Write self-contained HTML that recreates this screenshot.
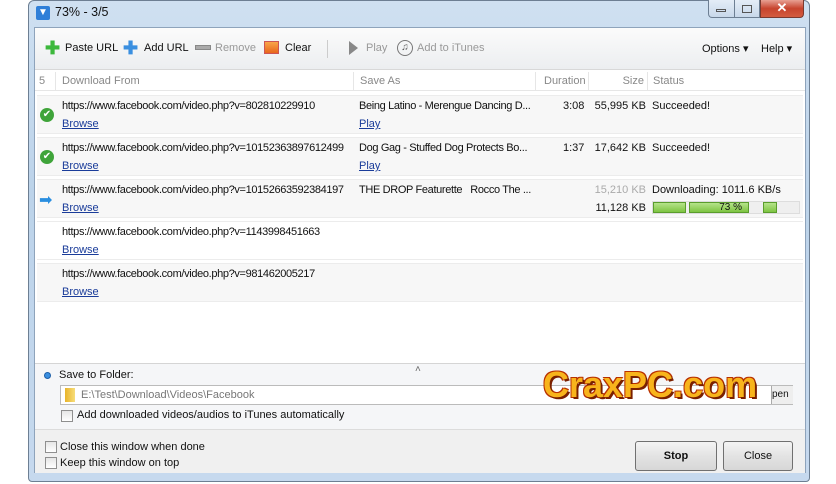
<!DOCTYPE html>
<html><head><style>
*{margin:0;padding:0;box-sizing:border-box}
body{width:836px;height:484px;background:#fff;font-family:"Liberation Sans",sans-serif;font-size:11px;color:#111;position:relative;overflow:hidden}
.abs{position:absolute}
.win{left:28px;top:0;width:782px;height:482px;border:1px solid #6d7f93;border-radius:6px 6px 4px 4px;background:linear-gradient(#cfe0f1,#bcd3ea 40%,#c6d9ee);}
.inner{left:34px;top:27px;width:772px;height:446px;background:#fff;border:1px solid #8ea3bb}
.tb{left:0;top:0;width:770px;height:42px;background:linear-gradient(#fbfbfb,#eceef0);border-bottom:1px solid #d8d8d8}
.ti{top:14px;color:#111}
.dis{color:#999}
.hdr{top:44px;left:0;width:770px;height:19px;color:#888;border-bottom:1px solid #e6e6e6}
.row{left:2px;width:766px;height:39px;background:#f7f7f7;border-top:1px solid #ececec;border-bottom:1px solid #ececec}
.u{letter-spacing:-0.35px}
a{color:#1a3c9a;text-decoration:underline}
.btn{border:1px solid #707070;border-radius:3px;background:linear-gradient(#f4f4f4,#e3e3e3 50%,#d7d7d7);text-align:center;line-height:28px}
.cb{width:12px;height:12px;border:1px solid #8f8f8f;background:linear-gradient(#e6e6e6,#fff)}
</style></head><body>
<div class="abs win"></div>
<div class="abs" style="left:36px;top:6px;width:14px;height:14px;background:#2f7fd8;border-radius:2px;color:#fff;font-size:10px;text-align:center;line-height:14px">&#9660;</div>
<div class="abs" style="left:55px;top:5px;font-size:12.5px">73% - 3/5</div>
<div class="abs" style="left:708px;top:0;width:52px;height:18px;border:1px solid #6d7f93;border-top:none;border-radius:0 0 0 4px;background:linear-gradient(#e4edf7,#c8d8ea)"></div>
<div class="abs" style="left:734px;top:0;width:1px;height:18px;background:#6d7f93"></div>
<div class="abs" style="left:716px;top:9px;width:10px;height:3px;border:1px solid #555"></div>
<div class="abs" style="left:742px;top:5px;width:10px;height:8px;border:1px solid #555"></div>
<div class="abs" style="left:760px;top:0;width:44px;height:18px;background:linear-gradient(#e8a093,#c7442e 50%,#d35c40);border:1px solid #7a3a30;border-top:none;border-radius:0 0 4px 0;color:#fff;font-weight:bold;text-align:center;line-height:16px;font-size:13px">✕</div>
<div class="abs inner">
 <div class="abs tb">
  <div class="abs ti" style="left:10px;top:12px;color:#3cb83c;font-size:18px;font-weight:bold;line-height:16px">✚</div>
  <div class="abs ti" style="left:30px">Paste URL</div>
  <div class="abs ti" style="left:88px;top:12px;color:#3a8fe0;font-size:18px;font-weight:bold;line-height:16px">✚</div>
  <div class="abs ti" style="left:109px">Add URL</div>
  <div class="abs" style="left:160px;top:17px;width:16px;height:5px;background:#aaa;border:1px solid #888"></div>
  <div class="abs ti dis" style="left:180px">Remove</div>
  <div class="abs" style="left:229px;top:13px;width:15px;height:13px;background:linear-gradient(#f9a64a,#e8661c);border:1px solid #c55"></div>
  <div class="abs ti" style="left:250px">Clear</div>
  <div class="abs" style="left:292px;top:12px;width:1px;height:18px;background:#ccc"></div>
  <div class="abs" style="left:314px;top:13px;width:0;height:0;border-left:9px solid #888;border-top:7px solid transparent;border-bottom:7px solid transparent"></div>
  <div class="abs ti dis" style="left:331px">Play</div>
  <div class="abs" style="left:362px;top:12px;width:16px;height:16px;border:1.5px solid #777;border-radius:50%;font-size:10px;text-align:center;line-height:13px;color:#555">♫</div>
  <div class="abs ti dis" style="left:382px">Add to iTunes</div>
  <div class="abs ti" style="left:667px">Options &#9662;</div>
  <div class="abs ti" style="left:726px">Help &#9662;</div>
 </div>
 <div class="abs hdr">
  <span class="abs" style="left:4px;top:3px">5</span>
  <span class="abs" style="left:20px;top:0;height:18px;border-left:1px solid #e6e6e6;padding:3px 0 0 6px">Download From</span>
  <span class="abs" style="left:318px;top:0;height:18px;border-left:1px solid #e6e6e6;padding:3px 0 0 6px">Save As</span>
  <span class="abs" style="left:500px;top:0;height:18px;border-left:1px solid #e6e6e6;padding:3px 0 0 8px">Duration</span>
  <span class="abs" style="left:553px;top:0;height:18px;width:58px;border-left:1px solid #e6e6e6;padding:3px 2px 0 0;text-align:right">Size</span>
  <span class="abs" style="left:612px;top:0;height:18px;border-left:1px solid #e6e6e6;padding:3px 0 0 5px">Status</span>
 </div>
 <div class="abs row" style="top:67px"></div>
 <div class="abs row" style="top:109px"></div>
 <div class="abs row" style="top:151px"></div>
 <div class="abs row" style="top:193px;background:#fff"></div>
 <div class="abs row" style="top:235px"></div>
 <div class="abs" style="left:5px;top:80px;width:14px;height:14px;border-radius:50%;background:#3fa43a;color:#fff;font-size:10px;text-align:center;line-height:14px">✔</div>
 <div class="abs" style="left:5px;top:122px;width:14px;height:14px;border-radius:50%;background:#3fa43a;color:#fff;font-size:10px;text-align:center;line-height:14px">✔</div>
 <div class="abs" style="left:4px;top:162px;color:#2a8ee0;font-size:16px">➡</div>
 <div class="abs u" style="left:27px;top:72px">https://www.facebook.com/video.php?v=802810229910</div>
 <div class="abs" style="left:27px;top:90px"><a>Browse</a></div>
 <div class="abs u" style="left:27px;top:114px">https://www.facebook.com/video.php?v=10152363897612499</div>
 <div class="abs" style="left:27px;top:132px"><a>Browse</a></div>
 <div class="abs u" style="left:27px;top:156px">https://www.facebook.com/video.php?v=10152663592384197</div>
 <div class="abs" style="left:27px;top:174px"><a>Browse</a></div>
 <div class="abs u" style="left:27px;top:198px">https://www.facebook.com/video.php?v=1143998451663</div>
 <div class="abs" style="left:27px;top:216px"><a>Browse</a></div>
 <div class="abs u" style="left:27px;top:240px">https://www.facebook.com/video.php?v=981462005217</div>
 <div class="abs" style="left:27px;top:258px"><a>Browse</a></div>
 <div class="abs u" style="left:324px;top:72px">Being Latino - Merengue Dancing D...</div>
 <div class="abs" style="left:324px;top:90px"><a>Play</a></div>
 <div class="abs u" style="left:324px;top:114px">Dog Gag - Stuffed Dog Protects Bo...</div>
 <div class="abs" style="left:324px;top:132px"><a>Play</a></div>
 <div class="abs u" style="left:324px;top:156px">THE DROP Featurette &nbsp; Rocco The ...</div>
 <div class="abs" style="left:528px;top:72px">3:08</div>
 <div class="abs" style="left:528px;top:114px">1:37</div>
 <div class="abs" style="left:553px;top:72px;width:58px;text-align:right">55,995 KB</div>
 <div class="abs" style="left:553px;top:114px;width:58px;text-align:right">17,642 KB</div>
 <div class="abs" style="left:553px;top:156px;width:58px;text-align:right;color:#aaa">15,210 KB</div>
 <div class="abs" style="left:553px;top:174px;width:58px;text-align:right">11,128 KB</div>
 <div class="abs" style="left:617px;top:72px">Succeeded!</div>
 <div class="abs" style="left:617px;top:114px">Succeeded!</div>
 <div class="abs" style="left:617px;top:156px">Downloading: 1011.6 KB/s</div>
 <div class="abs" style="left:617px;top:173px;width:148px;height:13px;background:#efefef;border:1px solid #ddd"></div>
 <div class="abs" style="left:618px;top:174px;width:33px;height:11px;background:linear-gradient(#b5e38a,#7ec442);border:1px solid #5a9d2c"></div>
 <div class="abs" style="left:654px;top:174px;width:60px;height:11px;background:linear-gradient(#b5e38a,#7ec442);border:1px solid #5a9d2c;font-size:10px;text-align:right;padding-right:6px;line-height:10px">73 %</div>
 <div class="abs" style="left:728px;top:174px;width:14px;height:11px;background:linear-gradient(#b5e38a,#7ec442);border:1px solid #5a9d2c"></div>
 <div class="abs" style="left:0;top:335px;width:770px;height:66px;background:#f5f6f8;border-top:1px solid #d5d5d5"></div>
 <div class="abs" style="left:380px;top:336px;color:#666;font-size:10px">&#708;</div>
 <div class="abs" style="left:9px;top:344px;width:7px;height:7px;border-radius:50%;background:#3a8fe0;border:1px solid #1d5fa8"></div>
 <div class="abs" style="left:24px;top:341px">Save to Folder:</div>
 <div class="abs" style="left:25px;top:357px;width:733px;height:20px;background:#fff;border:1px solid #bbb"></div>
 <div class="abs" style="left:30px;top:360px;width:10px;height:14px;background:linear-gradient(90deg,#e8b42a,#f7dd7a)"></div>
 <div class="abs" style="left:46px;top:361px;color:#777">E:\Test\Download\Videos\Facebook</div>
 <div class="abs" style="left:736px;top:358px;width:22px;height:18px;border-left:1px solid #aaa;background:#eee;font-size:10px;line-height:18px">pen</div>
 <div class="abs cb" style="left:26px;top:382px"></div>
 <div class="abs" style="left:42px;top:381px">Add downloaded videos/audios to iTunes automatically</div>
 <div class="abs" style="left:0;top:401px;width:770px;height:44px;background:#f0f0f0;border-top:1px solid #dcdcdc"></div>
 <div class="abs cb" style="left:10px;top:413px"></div>
 <div class="abs" style="left:25px;top:413px">Close this window when done</div>
 <div class="abs cb" style="left:10px;top:429px"></div>
 <div class="abs" style="left:25px;top:429px">Keep this window on top</div>
 <div class="abs btn" style="left:600px;top:413px;width:82px;height:30px;font-weight:bold">Stop</div>
 <div class="abs btn" style="left:688px;top:413px;width:70px;height:30px">Close</div>
</div>
<div class="abs" style="left:543px;top:364px;font-size:36px;font-weight:bold;font-family:'Liberation Sans',sans-serif;color:#f8b41c;text-shadow:2px 2px 0 #7a2000,-1px -1px 0 #b83000,1px -1px 0 #b83000,-1px 1px 0 #b83000;letter-spacing:0px">CraxPC.com</div>
</body></html>
